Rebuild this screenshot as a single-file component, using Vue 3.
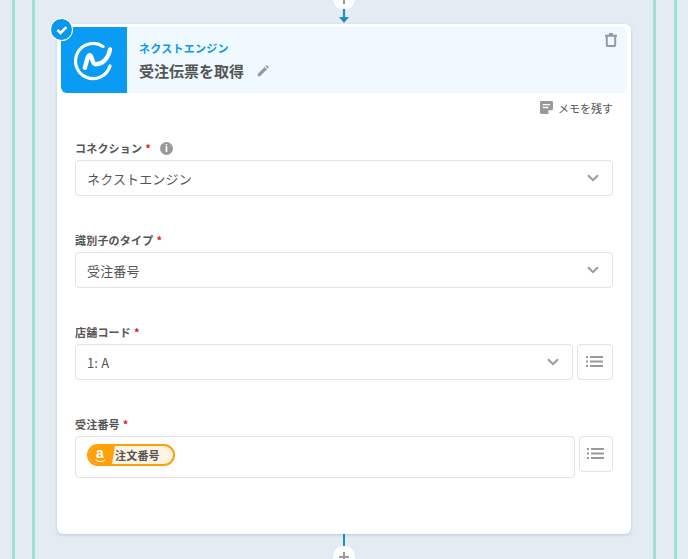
<script setup>
const fields = [
  { label: 'コネクション', value: 'ネクストエンジン', info: true },
  { label: '識別子のタイプ', value: '受注番号' },
  { label: '店舗コード', value: '1: A', list: true },
]
</script>

<template>
  <div class="page">
    <div class="outer">
      <div class="inner">
        <div class="flow">
          <div class="top-link">
            <div class="plus plus-top"><span class="plus-h"></span><span class="plus-v"></span></div>
            <svg class="arrow" width="10" height="14" viewBox="0 0 10 14"><path d="M3.900 0h2.200v8H10L5 14 0 8h3.900z" fill="#1f8fb8"/></svg>
          </div>
          <div class="card">
            <div class="badge">
              <svg width="16" height="16" viewBox="0 0 16 16"><path d="M3.400 8 6.600 11 12.400 5.200" fill="none" stroke="#fff" stroke-width="2.600"/></svg>
            </div>
            <header class="head">
              <div class="logo">
                <svg width="42" height="42" viewBox="0 0 42 42" fill="none" stroke="#fff" stroke-linecap="round">
                  <path d="M30 7.500A17.600 17.600 0 1 0 37 27" stroke-width="3.200"/>
                  <path d="M11.800 28.700C13.500 24 14.500 16 16.800 16.200c2.700.2 1.700 8.800 5.700 9 7 .3 13-6 14.500-14.700" stroke-width="4.400"/>
                </svg>
              </div>
              <div class="head-text">
                <div class="app-name">ネクストエンジン</div>
                <div class="title-row">
                  <span class="title">受注伝票を取得</span>
                  <svg width="12" height="12" viewBox="0 0 14 14"><path d="M0.800 13.200V10.400L8.900 2.300 11.700 5.100 3.600 13.200zM9.800 1.400 10.700.5a1 1 0 0 1 1.400 0l1.400 1.400a1 1 0 0 1 0 1.400l-.9.9z" fill="#999"/></svg>
                </div>
              </div>
              <svg class="trash" width="12" height="14" viewBox="0 0 12 14"><path d="M4 1h4M0 2.800h12M1.800 3v9.200a.8.8 0 0 0 .8.8h6.800a.8.8 0 0 0 .8-.8V3" fill="none" stroke="#999" stroke-width="2"/></svg>
            </header>

            <div class="memo-row">
              <svg width="13" height="13" viewBox="0 0 14 14"><path d="M1.500 0h11A1.500 1.500 0 0 1 14 1.500V9l-5 5H1.500A1.500 1.500 0 0 1 0 12.500v-11A1.500 1.500 0 0 1 1.500 0z" fill="#999"/><path d="M3 4h8M3 7h6" stroke="#fff" stroke-width="1.400"/><path d="M9 14v-4h4.500z" fill="#fff"/></svg>
              <span>メモを残す</span>
            </div>

            <div class="form">
              <div v-for="f in fields" :key="f.label" class="field">
                <div class="label">
                  <span>{{ f.label }}</span><em>*</em>
                  <span v-if="f.info" class="info">i</span>
                </div>
                <div class="control-row">
                  <div class="select">
                    <span>{{ f.value }}</span>
                    <svg width="12" height="8" viewBox="0 0 12 8"><path d="M1 1.200 6 6.200 11 1.200" fill="none" stroke="#999" stroke-width="2"/></svg>
                  </div>
                  <button v-if="f.list" class="list-btn" type="button">
                    <svg width="17" height="11" viewBox="0 0 17 11"><path d="M0 1h2M4 1h13M0 5.500h2M4 5.500h13M0 10h2M4 10h13" stroke="#999" stroke-width="1.800"/></svg>
                  </button>
                </div>
              </div>

              <div class="field">
                <div class="label"><span>受注番号</span><em>*</em></div>
                <div class="control-row tall">
                  <div class="token-box">
                    <span class="token">
                      <span class="token-icon">
                        <span class="a">a</span>
                        <svg class="smile" width="11" height="4" viewBox="0 0 11 4"><path d="M.5.500C3 3.200 8 3.200 10.500.500" fill="none" stroke="#fff" stroke-width="1.100"/></svg>
                      </span>
                      <span class="token-text">注文番号</span>
                    </span>
                  </div>
                  <button class="list-btn narrow" type="button">
                    <svg width="17" height="11" viewBox="0 0 17 11"><path d="M0 1h2M4 1h13M0 5.500h2M4 5.500h13M0 10h2M4 10h13" stroke="#999" stroke-width="1.800"/></svg>
                  </button>
                </div>
              </div>
            </div>
          </div>
          <div class="bottom-link">
            <div class="stem-bottom"></div>
            <div class="plus"><span class="plus-h"></span><span class="plus-v"></span></div>
          </div>
        </div>
      </div>
    </div>
  </div>
</template>

<style>
html, body { margin: 0; background: #e3ecf3; }
</style>

<style scoped>
* { box-sizing: border-box; }
.page {
  width: 688px;
  height: 559px;
  overflow: hidden;
  padding: 0 11px 0 12px;
  background: #e3ecf3;
  font-family: "Noto Sans CJK JP", "Noto Sans", sans-serif;
  color: #555;
}
.outer, .inner {
  height: 100%;
  border-left: 3px solid #a2e0d5;
  border-right: 3px solid #a2e0d5;
}
.outer { padding: 0 18px; }
.inner { padding: 0 22px; margin-left: -1px; }
.flow { height: 100%; display: flex; flex-direction: column; align-items: stretch; }
.top-link { position: relative; height: 24px; flex: none; }
.plus {
  position: relative;
  width: 22px;
  height: 22px;
  border-radius: 50%;
  background: #fff;
  flex: none;
}
.plus-top { position: absolute; left: 276px; top: -12px; }
.plus-h, .plus-v { position: absolute; background: #999; }
.plus-h { left: 6px; right: 6px; top: 10px; height: 2px; }
.plus-v { top: 6px; bottom: 6px; left: 10px; width: 2px; }
.arrow { position: absolute; left: 282px; top: 9px; }
.card {
  position: relative;
  flex: none;
  height: 510px;
  background: #fff;
  border-radius: 6px;
  padding: 3px 4px 0;
  box-shadow: 0 1px 3px rgba(80, 100, 120, .25);
}
.badge {
  position: absolute;
  left: -6px;
  top: -5px;
  width: 21px;
  height: 21px;
  border-radius: 50%;
  background: #0a97ef;
  display: flex;
  align-items: center;
  justify-content: center;
  box-shadow: 0 0 0 1px #fff;
  z-index: 1;
}
.head {
  position: relative;
  height: 66px;
  display: flex;
  background: #f0f9ff;
  border-radius: 6px;
}
.logo {
  width: 66px;
  height: 66px;
  flex: none;
  background: #0a9bf5;
  border-radius: 6px 0 0 6px;
  display: flex;
  align-items: center;
  justify-content: center;
}
.head-text { padding: 12px 0 0 12px; }
.app-name { font-size: 11px; line-height: 18px; font-weight: 700; color: #0a97ef; letter-spacing: .25px; }
.title-row { display: flex; align-items: center; gap: 13px; margin-top: 2px; }
.title { font-size: 15px; line-height: 24px; font-weight: 700; color: #555; }
.trash { position: absolute; right: 10px; top: 6px; }
.memo-row {
  display: flex;
  justify-content: flex-end;
  align-items: center;
  gap: 5px;
  height: 29px;
  padding-right: 14px;
  font-size: 11px;
  color: #555;
}
.form { padding: 0 14px; margin-top: 17px; }
.field { margin-bottom: 35px; }
.label {
  display: flex;
  align-items: center;
  height: 18px;
  margin-bottom: 3px;
  font-size: 11px;
  font-weight: 700;
  letter-spacing: .2px;
  color: #555;
}
.label em { font-style: normal; color: #e02020; margin-left: 3px; }
.info {
  width: 13px;
  height: 13px;
  margin-left: 9px;
  border-radius: 50%;
  background: #999;
  color: #fff;
  font-size: 10px;
  line-height: 13px;
  font-weight: 700;
  text-align: center;
  font-family: "Liberation Sans", sans-serif;
}
.control-row { display: flex; gap: 4px; }
.select {
  flex: 1;
  height: 36px;
  display: flex;
  align-items: center;
  justify-content: space-between;
  padding: 0 13px 0 11px;
  background: #fff;
  border: 1px solid #e2e2e2;
  border-radius: 4px;
  font-size: 13px;
  letter-spacing: .15px;
  color: #555;
}
.list-btn {
  width: 36px;
  height: 36px;
  flex: none;
  padding: 0 1px 1px 0;
  display: flex;
  align-items: center;
  justify-content: center;
  background: #fff;
  border: 1px solid #e2e2e2;
  border-radius: 4px;
}
.list-btn.narrow { width: 34px; }
.tall { align-items: flex-start; }
.token-box {
  flex: 1;
  height: 42px;
  padding: 7px 11px;
  border: 1px solid #e2e2e2;
  border-radius: 4px;
}
.token {
  display: inline-flex;
  height: 22px;
  width: 88px;
  border: 2px solid #ff9f0a;
  border-radius: 11px;
  background: #fff3e2;
  overflow: hidden;
}
.token-icon {
  position: relative;
  width: 26px;
  flex: none;
  background: #ff9f0a;
  clip-path: polygon(0 0, 100% 0, 88% 100%, 0 100%);
  color: #fff;
}
.a {
  position: absolute;
  left: 7px;
  top: -1px;
  font-size: 14px;
  line-height: 16px;
  font-weight: 700;
  font-family: "Liberation Sans", sans-serif;
}
.smile { position: absolute; left: 6px; top: 13px; }
.token-text {
  margin-left: 0;
  font-size: 11px;
  line-height: 18px;
  font-weight: 700;
  color: #555;
  letter-spacing: .2px;
}
.bottom-link { display: flex; flex-direction: column; align-items: center; width: 100%; }
.stem-bottom { width: 2px; height: 12px; background: #1f8fb8; }
</style>
